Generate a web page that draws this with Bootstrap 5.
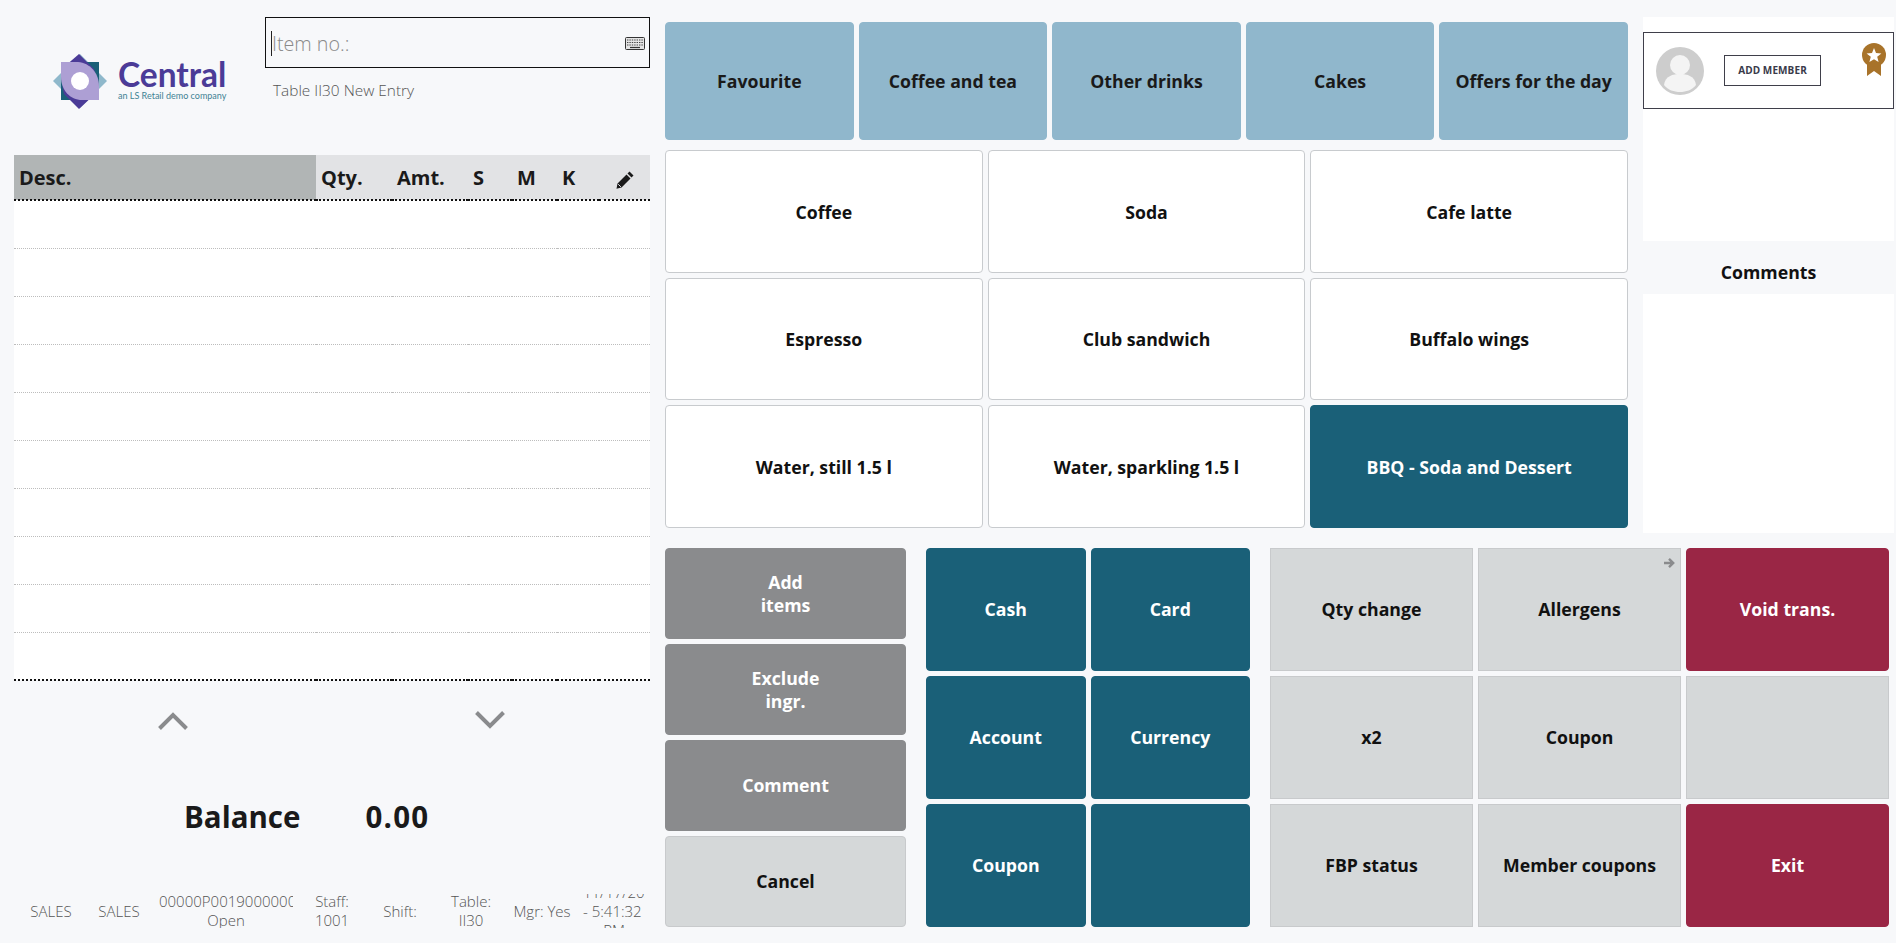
<!doctype html>
<html lang="en">
<head>
<meta charset="utf-8">
<title>POS</title>
<link href="https://cdn.jsdelivr.net/npm/bootstrap@5.3.0/dist/css/bootstrap.min.css" rel="stylesheet">
<style>
html,body{height:943px;overflow:hidden}
body{background:#f7f8fa;font-family:"Open Sans","Noto Sans",sans-serif;color:#111}
.pos-root{padding-left:14px;gap:15px}
.pos-left{width:636px;flex:none}
.pos-head{height:155px;padding-top:17px}
.pos-logo{width:251px;flex:none;padding:36px 0 0 38px;gap:10px}
.pos-logo-text{padding-top:6px}
.pos-logo-name{font-family:Lato,sans-serif;font-weight:700;font-size:33.5px;line-height:30px;color:#4b3b97}
.pos-logo-sub{font-family:Lato,sans-serif;font-size:9px;line-height:10px;color:#3f8294;margin-top:2px;white-space:nowrap}
.pos-search{width:385px;flex:none}
.pos-inputbox{height:51px;border:1.5px solid #111;padding:2px 4px 0 5px}
.pos-caret{width:1px;height:25px;background:#222;flex:none}
.pos-input.form-control{background:transparent;border:0;padding:0;border-radius:0;font-size:19.7px;font-weight:300;box-shadow:none;height:30px}
.pos-input::placeholder{color:#8a8a8a}
.pos-state{font-size:15.4px;font-weight:300;color:#555;padding:13px 0 0 8px;line-height:20px}
.pos-table.table{margin:0;table-layout:fixed;width:636px;--bs-table-bg:#fff}
.pos-table th{height:45px;padding:2px 0 0 5px;background:#e2e3e5;font-size:20px;line-height:42px;font-weight:700;border:0;border-bottom:2px dotted #111;color:#1a1a1a;white-space:nowrap}
.pos-table th.pos-sorted{background:#b1b5b5}
.pos-table td{height:48px;padding:0;border:0;border-bottom:1px dotted #bdbdbd;background:#fff}
.pos-table tr:last-child td{border-bottom:2px dotted #111}
.pos-table-wrap{height:526px;overflow:hidden}
.pos-pencil{margin-left:11px}
.pos-scroll{height:80px}
.pos-scroll>div{padding-top:26px}
.pos-balance{height:133px;padding-top:36px;font-size:29.5px;line-height:40px;font-weight:700;color:#1a1a1a;gap:65px;padding-left:170px}
.pos-amount{letter-spacing:1.2px}
.pos-foot{height:34px;margin-left:3px;display:grid;grid-template-columns:68px 68px 146px 66px 70px 72px 70px 74px;font-size:15px;font-weight:300;line-height:19px;color:#555;text-align:center;overflow:hidden}
.pos-foot>div{margin:0 6px;overflow:hidden;display:flex;flex-direction:column;justify-content:center;height:34px}
.pos-foot span{display:block}
.pos-right{width:1229px;flex:none;padding-top:17px}
.pos-top{gap:15px}
.pos-center{width:963px;flex:none;padding-top:5px}
.pos-side{width:251px;flex:none;height:516px}
.pos-cats{display:grid;grid-template-columns:repeat(5,1fr);gap:5px;height:118px}
.pos-items{display:grid;grid-template-columns:repeat(3,1fr);grid-template-rows:repeat(3,1fr);gap:5px;height:378px;margin-top:10px}
.pos-bottom{margin-top:15px;height:379px;gap:20px}
.pos-col1{display:grid;grid-template-rows:repeat(4,1fr);gap:5px;width:241px;flex:none}
.pos-col2{display:grid;grid-template-columns:repeat(2,1fr);grid-template-rows:repeat(3,1fr);gap:5px;width:324px;flex:none}
.pos-col3{display:grid;grid-template-columns:repeat(3,1fr);grid-template-rows:repeat(3,1fr);gap:5px;width:619px;flex:none}
.pos-btn.btn{position:relative;font-size:17.7px;font-weight:700;line-height:23px;padding:0 4px;border-radius:4px;display:flex;align-items:center;justify-content:center;text-align:center;border-width:1px;border-style:solid}
.pos-items .pos-btn.btn{padding-top:2px}
.pos-cat{background:#90b7cc;border-color:#90b7cc;color:#1a1a1a}
.pos-item{background:#fff;border-color:#c8cbce;color:#111}
.pos-teal{background:#1a6078;border-color:#1a6078;color:#fff}
.pos-grey{background:#8a8b8d;border-color:#8a8b8d;color:#fff}
.pos-light{background:#d5d8d9;border-color:#c8cacc;color:#111}
.pos-light.pos-square{border-radius:0;border-width:1.5px}
.pos-red{background:#9a2645;border-color:#9a2645;color:#fff}
.pos-arrow{position:absolute;top:8px;right:5px}
.pos-panel{background:#fff}
.pos-member-wrap{height:224px;padding-top:15px}
.pos-member{height:77px;border:1px solid #3f3f4a;position:relative;padding:0 0 0 12px;gap:20px}
.pos-add{width:97px;height:31px;border:1px solid #3f3f4a;font-size:10px;font-weight:700;color:#3a3a4a;line-height:29px;text-align:center;letter-spacing:.1px}
.pos-medal{position:absolute;top:10px;right:7px}
.pos-comments{height:53px;font-size:17.7px;font-weight:700;line-height:62px;text-align:center;color:#111}
.pos-commentbox{height:239px}
</style>
</head>
<body>
<div class="pos-root d-flex">
  <div class="pos-left">
    <div class="pos-head d-flex">
      <div class="pos-logo d-flex">
        <svg width="56" height="56" viewBox="0 0 56 56" class="flex-shrink-0" aria-hidden="true">
          <polygon points="1,28 28,1 55,28 28,55" fill="#8fb8cb"/>
          <rect x="9" y="9" width="38" height="38" fill="#1a6078"/>
          <path d="M27 1 L42 16 Q47 30 44 40 L27 56 L12 41 Q8 28 12 14 Z" fill="#4b3b97"/>
          <path d="M9 9 H26 C38 10 47 20 47 33 V47 H30 C18 47 9 37 9 24 Z" fill="#ad9fd4"/>
          <circle cx="28" cy="28" r="9" fill="#fff"/>
        </svg>
        <div class="pos-logo-text">
          <div class="pos-logo-name">Central</div>
          <div class="pos-logo-sub">an LS Retail demo company</div>
        </div>
      </div>
      <div class="pos-search">
        <div class="pos-inputbox d-flex align-items-center">
          <span class="pos-caret"></span>
          <input class="pos-input form-control" type="text" placeholder="Item no.:" aria-label="Item no.">
          <svg width="20" height="13" viewBox="0 0 20 13" class="flex-shrink-0" aria-hidden="true">
            <rect x=".5" y=".5" width="19" height="12" rx="1" fill="#e4e4e4" stroke="#333"/>
            <path d="M2 3h16M2 5.5h16M2 8h16" stroke="#444" stroke-width="1.2" stroke-dasharray="1.4 1"/>
            <path d="M5 10.5h10" stroke="#333" stroke-width="1.2"/>
          </svg>
        </div>
        <div class="pos-state">Table II30 New Entry</div>
      </div>
    </div>
    <div class="pos-table-wrap">
    <table class="pos-table table">
      <colgroup><col style="width:302px"><col style="width:76px"><col style="width:76px"><col style="width:44px"><col style="width:45px"><col style="width:42px"><col style="width:51px"></colgroup>
      <thead>
        <tr>
          <th class="pos-sorted">Desc.</th><th>Qty.</th><th>Amt.</th><th>S</th><th>M</th><th>K</th>
          <th>
            <svg width="20" height="20" viewBox="0 0 20 20" class="pos-pencil" aria-hidden="true"><path d="M14.5 1.5l4 4-2 2-4-4zM11.5 4.5l4 4-9 9-5 1.2 1-5.2z" fill="#1a1a1a"/><path d="M3.2 14.2l2.7 2.7" stroke="#e2e3e5" stroke-width="1"/></svg>
          </th>
        </tr>
      </thead>
      <tbody>
        <tr><td></td><td></td><td></td><td></td><td></td><td></td><td></td></tr>
        <tr><td></td><td></td><td></td><td></td><td></td><td></td><td></td></tr>
        <tr><td></td><td></td><td></td><td></td><td></td><td></td><td></td></tr>
        <tr><td></td><td></td><td></td><td></td><td></td><td></td><td></td></tr>
        <tr><td></td><td></td><td></td><td></td><td></td><td></td><td></td></tr>
        <tr><td></td><td></td><td></td><td></td><td></td><td></td><td></td></tr>
        <tr><td></td><td></td><td></td><td></td><td></td><td></td><td></td></tr>
        <tr><td></td><td></td><td></td><td></td><td></td><td></td><td></td></tr>
        <tr><td></td><td></td><td></td><td></td><td></td><td></td><td></td></tr>
        <tr><td></td><td></td><td></td><td></td><td></td><td></td><td></td></tr>
      </tbody>
    </table>
    </div>
    <div class="pos-scroll row g-0">
      <div class="col-6 text-center">
        <svg width="32" height="20" viewBox="0 0 32 20" aria-hidden="true"><path d="M2.5 17.5L16 4l13.5 13.5" fill="none" stroke="#8a8b8d" stroke-width="4"/></svg>
      </div>
      <div class="col-6 text-center">
        <svg width="32" height="20" viewBox="1 1 32 20" aria-hidden="true"><path d="M2.5 2.5L16 16 29.5 2.5" fill="none" stroke="#8a8b8d" stroke-width="4"/></svg>
      </div>
    </div>
    <div class="pos-balance d-flex"><span>Balance</span><span class="pos-amount">0.00</span></div>
    <div class="pos-foot">
      <div><span>SALES</span></div>
      <div><span>SALES</span></div>
      <div><span class="text-nowrap text-start">00000P001900000001</span><span>Open</span></div>
      <div><span>Staff: 1001</span></div>
      <div><span>Shift:</span></div>
      <div><span>Table: II30</span></div>
      <div><span class="text-nowrap">Mgr: Yes</span></div>
      <div><span class="text-start text-nowrap">11/17/2023</span><span class="text-nowrap text-start">- 5:41:32</span><span>PM</span></div>
    </div>
  </div>
  <div class="pos-right">
    <div class="pos-top d-flex">
      <div class="pos-center">
        <div class="pos-cats">
          <button class="btn pos-btn pos-cat">Favourite</button>
          <button class="btn pos-btn pos-cat">Coffee and tea</button>
          <button class="btn pos-btn pos-cat">Other drinks</button>
          <button class="btn pos-btn pos-cat">Cakes</button>
          <button class="btn pos-btn pos-cat">Offers for the day</button>
        </div>
        <div class="pos-items">
          <button class="btn pos-btn pos-item">Coffee</button>
          <button class="btn pos-btn pos-item">Soda</button>
          <button class="btn pos-btn pos-item">Cafe latte</button>
          <button class="btn pos-btn pos-item">Espresso</button>
          <button class="btn pos-btn pos-item">Club sandwich</button>
          <button class="btn pos-btn pos-item">Buffalo wings</button>
          <button class="btn pos-btn pos-item">Water, still 1.5 l</button>
          <button class="btn pos-btn pos-item">Water, sparkling 1.5 l</button>
          <button class="btn pos-btn pos-teal">BBQ - Soda and Dessert</button>
        </div>
      </div>
      <div class="pos-side">
        <div class="pos-member-wrap pos-panel">
          <div class="pos-member d-flex align-items-center">
            <svg width="48" height="48" viewBox="0 0 48 48" aria-hidden="true">
              <circle cx="24" cy="24" r="24" fill="#cdcdcd"/>
              <circle cx="24" cy="18" r="10" fill="#f4f4f4"/>
              <path d="M8 38c1-9 9-11 16-11s15 2 16 11c-4 5-10 7-16 7s-12-2-16-7z" fill="#f4f4f4"/>
            </svg>
            <div class="pos-add">ADD MEMBER</div>
            <svg class="pos-medal" width="24" height="33" viewBox="0 0 24 33" aria-hidden="true">
              <path d="M5 18v15l7-5 7 5V18z" fill="#a8732a"/>
              <circle cx="12" cy="12" r="12" fill="#a8732a"/>
              <polygon points="12,5 14,10 19.4,10.4 15.2,13.8 16.6,19 12,16.2 7.4,19 8.8,13.8 4.6,10.4 10,10" fill="#fff"/>
            </svg>
          </div>
        </div>
        <div class="pos-comments">Comments</div>
        <div class="pos-commentbox pos-panel"></div>
      </div>
    </div>
    <div class="pos-bottom d-flex">
      <div class="pos-col1">
        <button class="btn pos-btn pos-grey">Add<br>items</button>
        <button class="btn pos-btn pos-grey">Exclude<br>ingr.</button>
        <button class="btn pos-btn pos-grey">Comment</button>
        <button class="btn pos-btn pos-light">Cancel</button>
      </div>
      <div class="pos-col2">
        <button class="btn pos-btn pos-teal">Cash</button>
        <button class="btn pos-btn pos-teal">Card</button>
        <button class="btn pos-btn pos-teal">Account</button>
        <button class="btn pos-btn pos-teal">Currency</button>
        <button class="btn pos-btn pos-teal">Coupon</button>
        <button class="btn pos-btn pos-teal" aria-label="Empty"></button>
      </div>
      <div class="pos-col3">
        <button class="btn pos-btn pos-light pos-square">Qty change</button>
        <button class="btn pos-btn pos-light pos-square">Allergens
          <svg class="pos-arrow" width="12" height="12" viewBox="0 0 12 12" aria-hidden="true"><path d="M1 6h8M6 1.8L10.2 6 6 10.2" fill="none" stroke="#8a8b8d" stroke-width="2.4"/></svg>
        </button>
        <button class="btn pos-btn pos-red">Void trans.</button>
        <button class="btn pos-btn pos-light pos-square">x2</button>
        <button class="btn pos-btn pos-light pos-square">Coupon</button>
        <button class="btn pos-btn pos-light pos-square" aria-label="Empty"></button>
        <button class="btn pos-btn pos-light pos-square">FBP status</button>
        <button class="btn pos-btn pos-light pos-square">Member coupons</button>
        <button class="btn pos-btn pos-red">Exit</button>
      </div>
    </div>
  </div>
</div>
</body>
</html>
